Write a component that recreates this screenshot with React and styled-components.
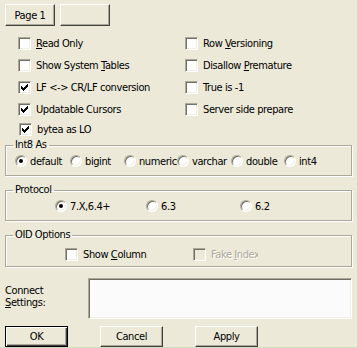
import React from "react";
import styled, { createGlobalStyle, css } from "styled-components";

const Global = createGlobalStyle`
  html, body { margin: 0; padding: 0; background: #ECE9D8; }
  body { width: 357px; height: 348px; overflow: hidden; }
  * { box-sizing: border-box; }
`;

const font = css`
  font-family: "DejaVu Sans Condensed", "Liberation Sans Narrow", "Liberation Sans", sans-serif;
  font-size: 11px;
  letter-spacing: -0.4px;
  color: #000;
`;

const Page = styled.div`
  ${font}
  width: 357px;
  height: 348px;
  background: #ECE9D8;
  display: flex;
  flex-direction: column;
  border-bottom: 1px solid #d3dcbd;
`;

const raised = css`
  background: #ECE9D8;
  border: 1px solid;
  border-color: #fff #404040 #404040 #fff;
  box-shadow: inset -1px -1px #aca899;
`;

const TabBar = styled.div`
  display: flex;
  gap: 5px;
  padding: 4px 5px 0;
`;

const TabButton = styled.div`
  ${raised}
  width: 50px;
  height: 22px;
  display: flex;
  align-items: center;
  justify-content: center;
`;

const Options = styled.div`
  display: grid;
  grid-template-columns: 167px 1fr;
  row-gap: 9px;
  margin-top: 11px;
  padding-left: 18px;
`;

const Row = styled.label`
  display: flex;
  align-items: center;
  gap: 5px;
  height: 13px;
  white-space: nowrap;
  color: ${(p) => (p.disabled ? "#aca899" : "#000")};
  text-shadow: ${(p) => (p.disabled ? "1px 1px #fff" : "none")};
  ${(p) => p.nudge && css`margin-top: -2px; margin-left: 1px;`}
`;

const Box = styled.span`
  flex: none;
  width: 13px;
  height: 13px;
  background: ${(p) => (p.disabled ? "#ECE9D8" : "#fff")};
  border: 1px solid;
  border-color: #aca899 #fff #fff #aca899;
  box-shadow: inset 1px 1px #716f64, inset -1px -1px #f1efe2;
  display: flex;
  align-items: center;
  justify-content: center;
`;

const Check = () => (
  <svg width="7" height="7" viewBox="0 0 7 7">
    <path d="M0 2h1v1h1v1h1v-1h1v-1h1v-1h1v-1h1v3h-1v1h-1v1h-1v1h-1v1h-1v-1h-1v-1h-1z" fill="#000" />
  </svg>
);

const CheckBox = ({ checked, disabled, nudge, children }) => (
  <Row disabled={disabled} nudge={nudge}>
    <Box disabled={disabled}>{checked && <Check />}</Box>
    <span>{children}</span>
  </Row>
);

const U = styled.span`
  text-decoration: underline;
  text-underline-offset: 1px;
`;

const Group = styled.fieldset`
  margin: ${(p) => p.mt}px 5px 0 5px;
  padding: ${(p) => p.pt}px 0 ${(p) => p.pb}px 0;
  border: 1px solid #aca899;
  box-shadow: inset 1px 1px #fff, 1px 1px #fff;
  min-width: 0;
`;

const Legend = styled.legend`
  margin-left: 7px;
  padding: 0 2px;
  line-height: 14px;
  height: 14px;
`;

const RadioRow = styled.div`
  display: grid;
  grid-template-columns: ${(p) => p.cols};
  padding-left: ${(p) => p.pl}px;
  height: 12px;
  align-items: center;
`;

const RadioItem = styled.label`
  display: flex;
  align-items: center;
  gap: 3px;
  white-space: nowrap;
  overflow: hidden;
  height: 12px;
`;

const Circle = styled.span`
  flex: none;
  width: 12px;
  height: 12px;
  border-radius: 50%;
  background: #fff;
  border: 1px solid;
  border-color: #aca899 #fff #fff #aca899;
  box-shadow: inset 1px 1px #716f64, inset -1px -1px #f1efe2;
  display: flex;
  align-items: center;
  justify-content: center;
  &::after {
    content: "";
    width: 4px;
    height: 4px;
    border-radius: 50%;
    background: ${(p) => (p.on ? "#000" : "transparent")};
  }
`;

const Radio = ({ on, children }) => (
  <RadioItem>
    <Circle on={on} />
    <span>{children}</span>
  </RadioItem>
);

const OidRow = styled.div`
  display: grid;
  grid-template-columns: 128px 65px;
  padding-left: 59px;
`;

const Clip = styled.div`
  overflow: hidden;
`;

const Connect = styled.div`
  display: flex;
  margin-top: 11px;
  padding: 0 5px;
`;

const ConnectLabel = styled.div`
  width: 83px;
  line-height: 12px;
  padding-top: 7px;
`;

const TextBox = styled.div`
  width: 264px;
  height: 41px;
  background: #fbfbfb;
  border: 1px solid;
  border-color: #aca899 #fff #fff #aca899;
  box-shadow: inset 1px 1px #716f64, inset -1px -1px #f1efe2;
`;

const Footer = styled.div`
  display: flex;
  gap: 32px;
  margin-top: 7px;
  padding-left: 5px;
`;

const Button = styled.div`
  ${raised}
  width: 63px;
  height: 21px;
  display: flex;
  align-items: center;
  justify-content: center;
  ${(p) =>
    p.primary &&
    css`
      border: 1px solid #000;
      box-shadow: inset 1px 1px #fff, inset -1px -1px #404040, inset -2px -2px #aca899;
    `}
`;

export default function App() {
  return (
    <>
      <Global />
      <Page>
        <TabBar>
          <TabButton>Page 1</TabButton>
          <TabButton />
        </TabBar>
        <Options>
          <CheckBox><U>R</U>ead Only</CheckBox>
          <CheckBox>Row <U>V</U>ersioning</CheckBox>
          <CheckBox>Show System <U>T</U>ables</CheckBox>
          <CheckBox>Disallow <U>P</U>remature</CheckBox>
          <CheckBox checked>LF &lt;-&gt; CR/LF conversion</CheckBox>
          <CheckBox>True is -1</CheckBox>
          <CheckBox checked>Updatable Cursors</CheckBox>
          <CheckBox>Server side prepare</CheckBox>
          <CheckBox checked nudge>bytea as LO</CheckBox>
        </Options>
        <Group mt={2} pt={3} pb={8}>
          <Legend>Int8 As</Legend>
          <RadioRow cols="55px 54px 53px 54px 53px 1fr" pl={9}>
            <Radio on>default</Radio>
            <Radio>bigint</Radio>
            <Radio>numeric</Radio>
            <Radio>varchar</Radio>
            <Radio>double</Radio>
            <Radio>int4</Radio>
          </RadioRow>
        </Group>
        <Group mt={7} pt={3} pb={8}>
          <Legend>Protocol</Legend>
          <RadioRow cols="91px 94px 1fr" pl={49}>
            <Radio on>7.X,6.4+</Radio>
            <Radio>6.3</Radio>
            <Radio>6.2</Radio>
          </RadioRow>
        </Group>
        <Group mt={7} pt={6} pb={5}>
          <Legend>OID Options</Legend>
          <OidRow>
            <CheckBox>Show <U>C</U>olumn</CheckBox>
            <Clip>
              <CheckBox disabled>Fake <U>I</U>ndex</CheckBox>
            </Clip>
          </OidRow>
        </Group>
        <Connect>
          <ConnectLabel>
            Connect
            <br />
            <U>S</U>ettings:
          </ConnectLabel>
          <TextBox />
        </Connect>
        <Footer>
          <Button primary>OK</Button>
          <Button>Cancel</Button>
          <Button>Apply</Button>
        </Footer>
      </Page>
    </>
  );
}
